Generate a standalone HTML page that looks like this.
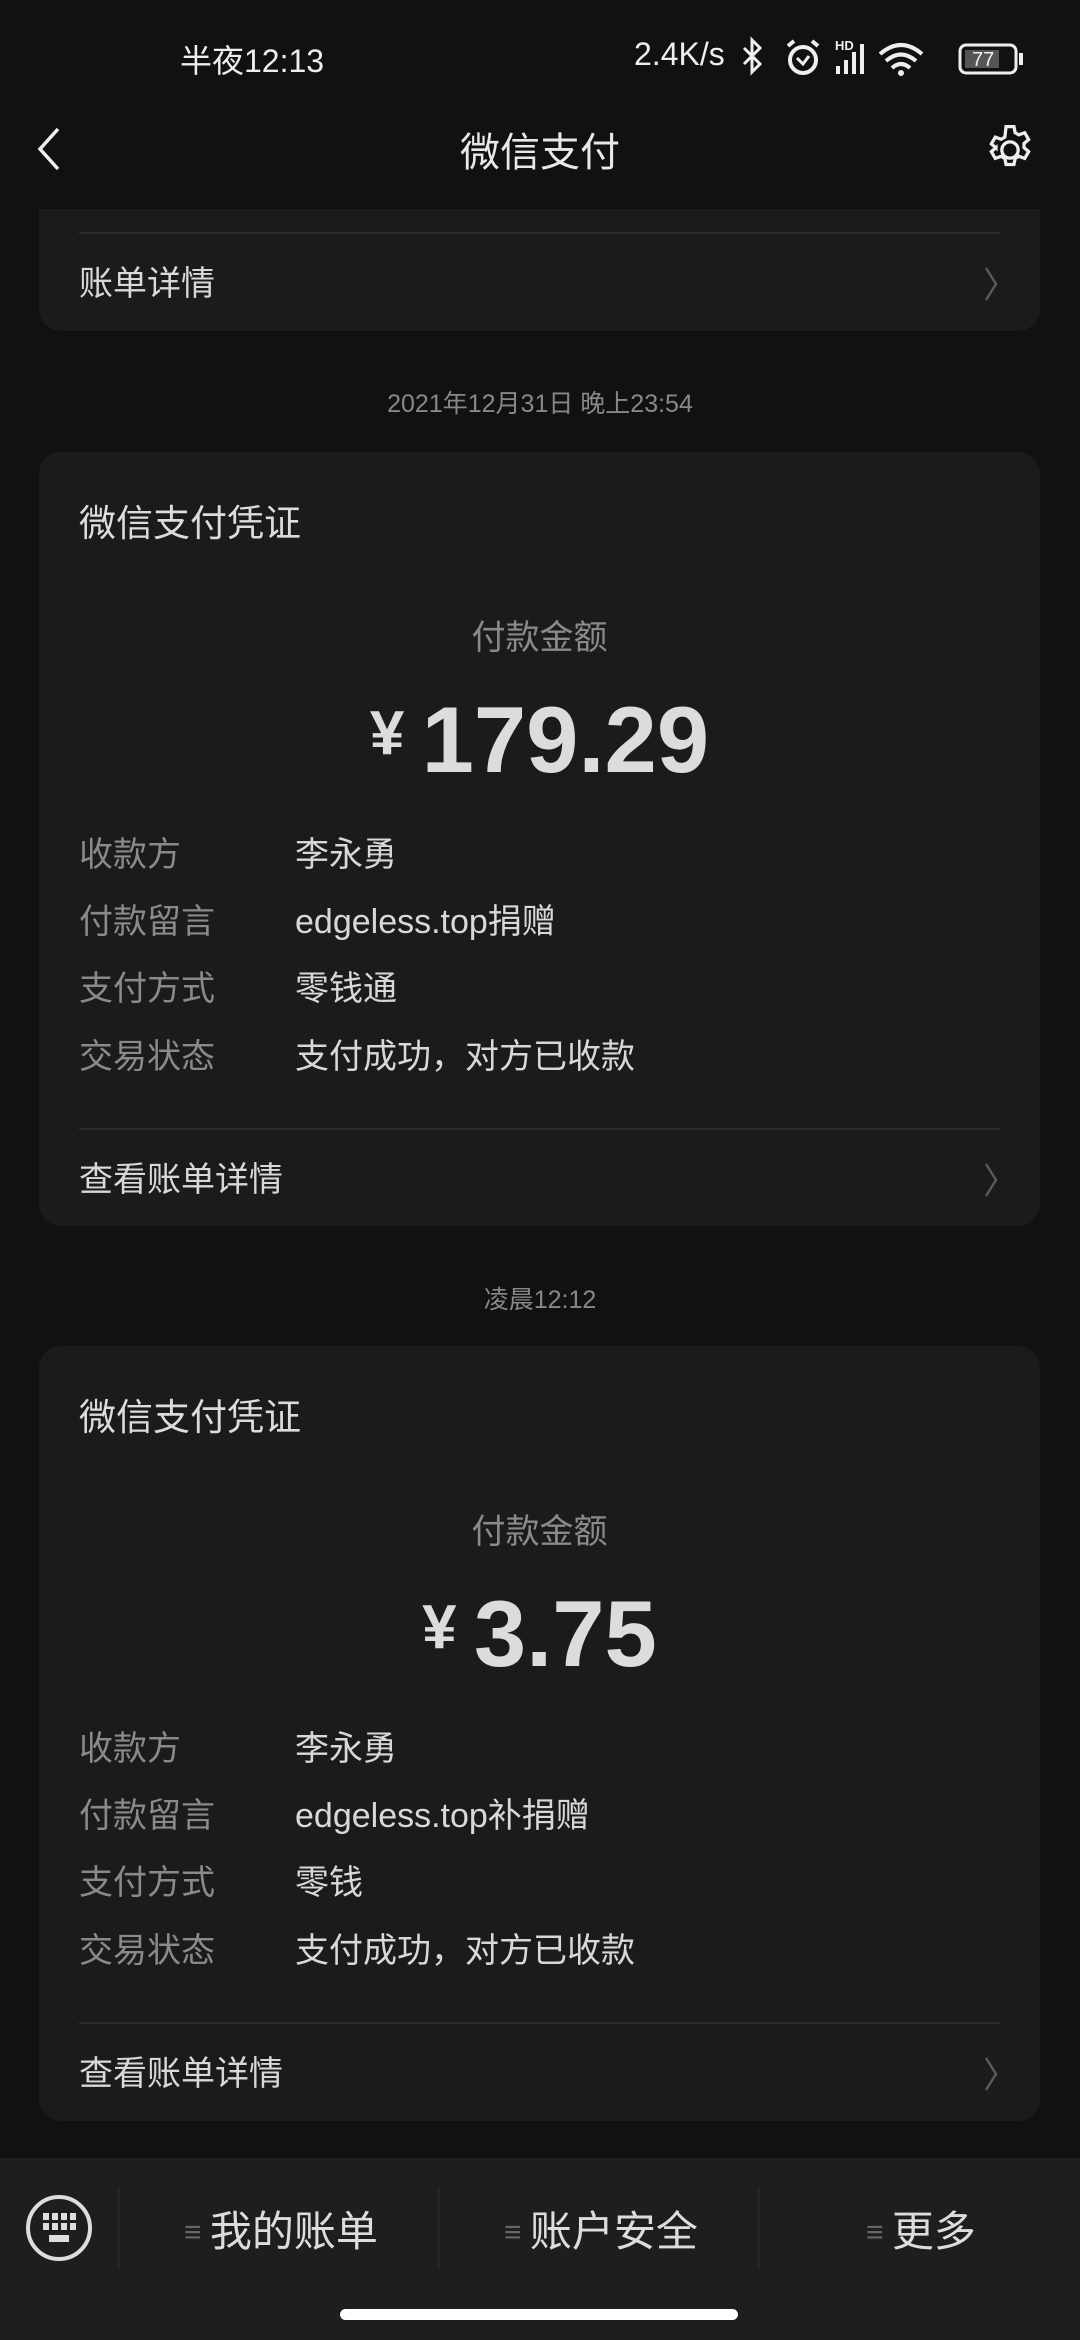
<!DOCTYPE html>
<html><head><meta charset="utf-8"><style>
*{margin:0;padding:0;box-sizing:border-box}
body{width:1080px;height:2340px;background:#111;position:relative;overflow:hidden;font-family:"Liberation Sans","Noto Sans CJK SC",sans-serif;color:#d6d6d6}
.a{position:absolute;white-space:nowrap}
.card{position:absolute;left:39px;width:1001px;background:#1b1b1b;border-radius:22px}
.lbl{position:absolute;left:40px;font-size:34px;color:#8a8a8a;line-height:40px}
.val{position:absolute;left:256px;font-size:34px;color:#d8d8d8;line-height:40px}
.div{position:absolute;left:40px;right:40px;height:2px;background:#2a2a2a}
.chev{position:absolute;right:42px;width:14px;height:36px}
</style></head><body>
<div class="a" style="left:180px;top:36px;font-size:32px;color:#eee">半夜12:13</div>
<div class="a" style="left:634px;top:36px;font-size:32px;color:#eee">2.4K/s</div>
<svg class="a" style="left:740px;top:34px" width="300" height="50" viewBox="0 0 300 50">
<path d="M4 14 L20 30 L12 38 V6 L20 14 L4 30" stroke="#eee" stroke-width="3" fill="none"/>
<circle cx="63" cy="26" r="13" stroke="#eee" stroke-width="4" fill="none"/><path d="M57 24 L63 30 L69 22" stroke="#eee" stroke-width="3" fill="none"/><path d="M48 12 l6-5 M78 12 l-6-5" stroke="#eee" stroke-width="4"/>
<text x="95" y="16" font-size="13" fill="#eee" font-family="Liberation Sans" font-weight="bold">HD</text>
<rect x="96" y="32" width="4" height="8" fill="#eee"/><rect x="104" y="26" width="4" height="14" fill="#eee"/><rect x="112" y="18" width="4" height="22" fill="#eee"/><rect x="120" y="10" width="4" height="30" fill="#eee"/>
<path d="M140 20 Q161 2 182 20 M146 27 Q161 14 176 27 M152 34 Q161 26 170 34" stroke="#eee" stroke-width="4" fill="none"/><circle cx="161" cy="39" r="3" fill="#eee"/>
<rect x="220" y="11" width="56" height="28" rx="6" stroke="#eee" stroke-width="3" fill="none"/><rect x="225" y="16" width="34" height="18" fill="#555"/><rect x="279" y="19" width="4" height="12" fill="#eee"/>
<text x="232" y="32" font-size="20" fill="#eee" font-family="Liberation Sans">77</text>
</svg>
<svg class="a" style="left:34px;top:126px" width="30" height="46" viewBox="0 0 30 46"><path d="M24 3 L6 23 L24 43" stroke="#eee" stroke-width="3.5" fill="none"/></svg>
<div class="a" style="left:0;width:1080px;text-align:center;top:120px;font-size:40px;color:#e8e8e8">微信支付</div>
<svg class="a" style="left:982px;top:122px" width="56" height="56" viewBox="0 0 24 24"><path d="M12 8.5a3.5 3.5 0 1 0 0 7 3.5 3.5 0 0 0 0-7z M10.3 2h3.4l.5 2.6 1.6.9 2.5-.9 1.7 2.9-2 1.7v1.8l2 1.7-1.7 2.9-2.5-.9-1.6.9-.5 2.6h-3.4l-.5-2.6-1.6-.9-2.5.9-1.7-2.9 2-1.7V11.1l-2-1.7 1.7-2.9 2.5.9 1.6-.9z" stroke="#eee" stroke-width="1.4" fill="none"/></svg>

<div class="card" style="top:209px;height:122px;border-radius:0 0 22px 22px">
<div class="div" style="top:23px"></div>
<div class="lbl" style="top:55px;color:#d8d8d8">账单详情</div>
<svg class="chev" style="top:57px" viewBox="0 0 14 36"><path d="M2 2 L12 18 L2 34" stroke="#5a5a5a" stroke-width="2.5" fill="none"/></svg>
</div>
<div class="a" style="left:0;width:1080px;text-align:center;top:384px;font-size:25px;color:#888">2021年12月31日 晚上23:54</div>

<div class="card" style="top:452px;height:774px">
<div class="a" style="left:40px;top:41px;font-size:37px;color:#dcdcdc">微信支付凭证</div>
<div class="a" style="left:0;width:1001px;text-align:center;top:158px;font-size:34px;color:#8a8a8a">付款金额</div>
<div class="a" style="left:0;width:1001px;text-align:center;top:227px;font-size:94px;font-weight:bold;color:#dcdcdc;line-height:110px"><span style="font-size:62px;vertical-align:18px">¥ </span>179.29</div>
<div class="lbl" style="top:383px">收款方</div><div class="val" style="top:383px">李永勇</div>
<div class="lbl" style="top:450px">付款留言</div><div class="val" style="top:450px">edgeless.top捐赠</div>
<div class="lbl" style="top:517px">支付方式</div><div class="val" style="top:517px">零钱通</div>
<div class="lbl" style="top:585px">交易状态</div><div class="val" style="top:585px">支付成功，对方已收款</div>
<div class="div" style="top:676px"></div>
<div class="lbl" style="top:708px;color:#d8d8d8">查看账单详情</div>
<svg class="chev" style="top:710px" viewBox="0 0 14 36"><path d="M2 2 L12 18 L2 34" stroke="#5a5a5a" stroke-width="2.5" fill="none"/></svg>
</div>
<div class="a" style="left:0;width:1080px;text-align:center;top:1280px;font-size:25px;color:#888">凌晨12:12</div>

<div class="card" style="top:1346px;height:775px">
<div class="a" style="left:40px;top:41px;font-size:37px;color:#dcdcdc">微信支付凭证</div>
<div class="a" style="left:0;width:1001px;text-align:center;top:158px;font-size:34px;color:#8a8a8a">付款金额</div>
<div class="a" style="left:0;width:1001px;text-align:center;top:227px;font-size:94px;font-weight:bold;color:#dcdcdc;line-height:110px"><span style="font-size:62px;vertical-align:18px">¥ </span>3.75</div>
<div class="lbl" style="top:383px">收款方</div><div class="val" style="top:383px">李永勇</div>
<div class="lbl" style="top:450px">付款留言</div><div class="val" style="top:450px">edgeless.top补捐赠</div>
<div class="lbl" style="top:517px">支付方式</div><div class="val" style="top:517px">零钱</div>
<div class="lbl" style="top:585px">交易状态</div><div class="val" style="top:585px">支付成功，对方已收款</div>
<div class="div" style="top:676px"></div>
<div class="lbl" style="top:708px;color:#d8d8d8">查看账单详情</div>
<svg class="chev" style="top:710px" viewBox="0 0 14 36"><path d="M2 2 L12 18 L2 34" stroke="#5a5a5a" stroke-width="2.5" fill="none"/></svg>
</div>

<div class="a" style="left:0;top:2158px;width:1080px;height:182px;background:#1e1e1e"></div>
<svg class="a" style="left:24px;top:2193px" width="70" height="70" viewBox="0 0 70 70"><circle cx="35" cy="35" r="31" stroke="#ddd" stroke-width="4" fill="none"/>
<g fill="#ddd"><rect x="19" y="20" width="6" height="7"/><rect x="28" y="20" width="6" height="7"/><rect x="37" y="20" width="6" height="7"/><rect x="46" y="20" width="6" height="7"/><rect x="19" y="30" width="6" height="7"/><rect x="28" y="30" width="6" height="7"/><rect x="37" y="30" width="6" height="7"/><rect x="46" y="30" width="6" height="7"/><rect x="25" y="42" width="20" height="7"/></g></svg>
<div class="a" style="left:118px;top:2188px;width:2px;height:80px;background:#262626"></div>
<div class="a" style="left:438px;top:2188px;width:2px;height:80px;background:#262626"></div>
<div class="a" style="left:758px;top:2188px;width:2px;height:80px;background:#262626"></div>
<div class="a" style="left:184px;top:2198px;font-size:42px;color:#ddd"><span style="color:#666;font-size:30px;vertical-align:4px">≡ </span>我的账单</div>
<div class="a" style="left:504px;top:2198px;font-size:42px;color:#ddd"><span style="color:#666;font-size:30px;vertical-align:4px">≡ </span>账户安全</div>
<div class="a" style="left:866px;top:2198px;font-size:42px;color:#ddd"><span style="color:#666;font-size:30px;vertical-align:4px">≡ </span>更多</div>
<div class="a" style="left:340px;top:2309px;width:398px;height:11px;border-radius:6px;background:#fff"></div>
</body></html>
